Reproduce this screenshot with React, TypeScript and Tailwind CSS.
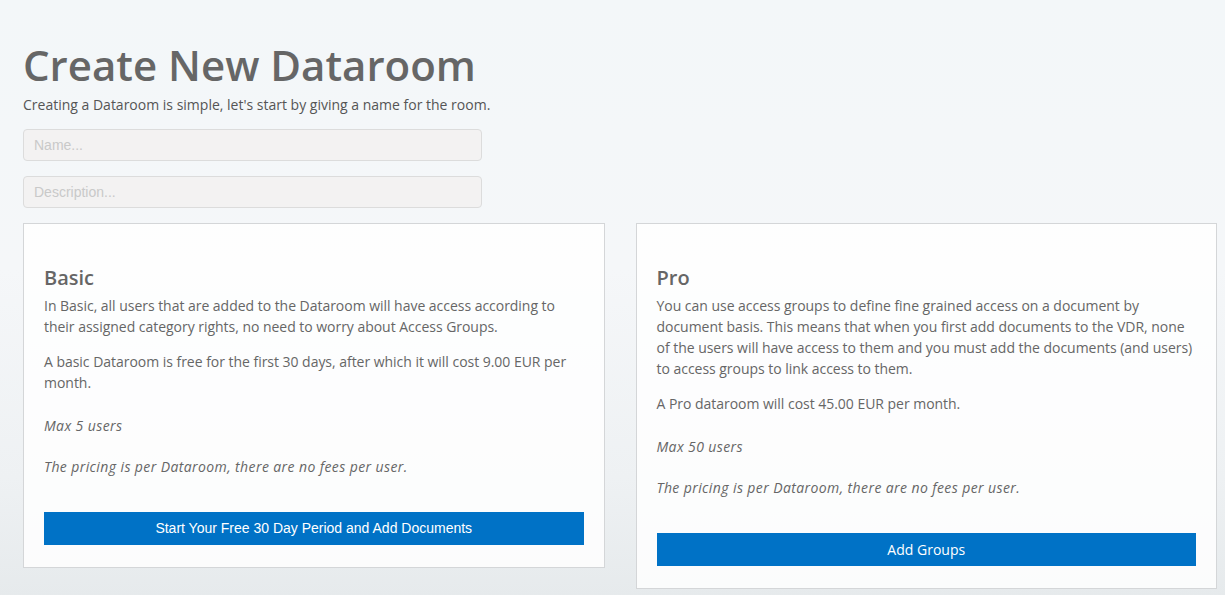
import React from 'react';

const openSans = "font-['Open_Sans',sans-serif]";

interface Plan {
  title: string;
  paragraphs: string[];
  notes: string[];
  action: string;
  actionFont: string;
}

const plans: Plan[] = [
  {
    title: 'Basic',
    paragraphs: [
      'In Basic, all users that are added to the Dataroom will have access according to their assigned category rights, no need to worry about Access Groups.',
      'A basic Dataroom is free for the first 30 days, after which it will cost 9.00 EUR per month.',
    ],
    notes: ['Max 5 users', 'The pricing is per Dataroom, there are no fees per user.'],
    action: 'Start Your Free 30 Day Period and Add Documents',
    actionFont: "font-['Liberation_Sans',Arial,sans-serif]",
  },
  {
    title: 'Pro',
    paragraphs: [
      'You can use access groups to define fine grained access on a document by document basis. This means that when you first add documents to the VDR, none of the users will have access to them and you must add the documents (and users) to access groups to link access to them.',
      'A Pro dataroom will cost 45.00 EUR per month.',
    ],
    notes: ['Max 50 users', 'The pricing is per Dataroom, there are no fees per user.'],
    action: 'Add Groups',
    actionFont: "font-['Open_Sans',sans-serif]",
  },
];

const PlanCard: React.FC<{ plan: Plan }> = ({ plan }) => (
  <div className="self-start border border-[#d4d6d8] bg-white/85 px-[20px] pt-[42px] pb-[22px]">
    <h3 className="text-[20px] leading-[24px] font-semibold text-[#666] mb-[5px]">{plan.title}</h3>
    {plan.paragraphs.map((p, i) => (
      <p key={i} className="text-[14px] leading-[21px] text-[#666] mb-[14px] tracking-[-0.03px]">{p}</p>
    ))}
    {plan.notes.map((n, i) => (
      <p
        key={i}
        className={`text-[14px] leading-[21px] text-[#666] italic tracking-[0.4px] mb-0 ${i === 0 ? 'mt-[22px]' : 'mt-[20px]'}`}
      >
        {n}
      </p>
    ))}
    <button
      className={`mt-[35px] w-full h-[33px] bg-[#0072c6] text-white text-[14px] ${plan.actionFont}`}
    >
      {plan.action}
    </button>
  </div>
);

export default function App() {
  return (
    <div
      className={`min-h-[595px] w-full bg-[linear-gradient(180deg,#f3f7f9_0%,#f5f7f9_45%,#eef1f3_80%,#e6eaec_100%)] ${openSans}`}
    >
      <div className="pl-[23px] pr-[8px] pt-[37px] pb-[8px]">
        <h1 className="text-[42px] leading-[56px] font-semibold text-[#666]">Create New Dataroom</h1>
        <p className="text-[14px] leading-[20px] text-[#555] mt-[2px]">
          Creating a Dataroom is simple, let's start by giving a name for the room.
        </p>
        <div className="flex flex-col gap-[15px] mt-[14px] w-[459px]">
          <input
            placeholder="Name..."
            className="h-[32px] rounded-[4px] border border-[#dcdcdc] bg-[#f3f2f2] px-[10px] text-[14px] font-['Liberation_Sans',Arial,sans-serif] placeholder:text-[#c9c9c9] outline-none"
          />
          <input
            placeholder="Description..."
            className="h-[32px] rounded-[4px] border border-[#dcdcdc] bg-[#f3f2f2] px-[10px] text-[14px] font-['Liberation_Sans',Arial,sans-serif] placeholder:text-[#c9c9c9] outline-none"
          />
        </div>
        <div className="grid grid-cols-2 gap-[31px] mt-[15px] w-[1194px] items-start">
          {plans.map(plan => (
            <PlanCard key={plan.title} plan={plan} />
          ))}
        </div>
      </div>
    </div>
  );
}
